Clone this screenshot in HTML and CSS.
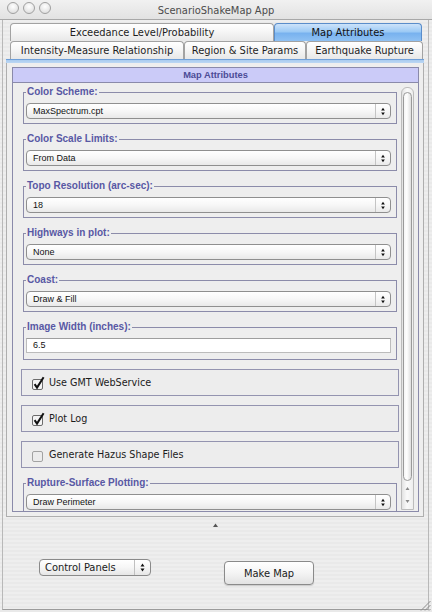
FILE: index.html
```html
<!DOCTYPE html>
<html>
<head>
<meta charset="utf-8">
<title>ScenarioShakeMap App</title>
<link rel="stylesheet" href="styles.css">
</head>
<body>
<div class="window">
  <header class="titlebar">
    <div class="lights"><span class="light"></span><span class="light"></span><span class="light"></span></div>
    <div class="title">ScenarioShakeMap App</div>
    <div></div>
  </header>
  <div class="frame">
    <div class="tabs">
      <div class="tabrow">
        <div class="tab t-exc">Exceedance Level/Probability</div>
        <div class="tab t-map selected">Map Attributes</div>
      </div>
      <div class="tabrow">
        <div class="tab t-imr">Intensity-Measure Relationship</div>
        <div class="tab t-reg">Region &amp; Site Params</div>
        <div class="tab t-eq">Earthquake Rupture</div>
      </div>
    </div>
    <div class="tabstripe"></div>
    <div class="tabpanel">
      <div class="mapattr">
        <div class="mapattr-head">Map Attributes</div>
        <div class="scrollpane">
          <div class="scrollcontent">
            <fieldset class="group"><legend>Color Scheme:</legend>
              <div class="combo"><span class="combo-text">MaxSpectrum.cpt</span><span class="combo-arrows"><svg width="15" height="14" viewBox="0 0 15 14"><path d="M5.5 6.5 L7.5 3.5 L9.5 6.5Z M5.5 8.5 L7.5 11.5 L9.5 8.5Z" fill="#111"/></svg></span></div>
            </fieldset>
            <fieldset class="group"><legend>Color Scale Limits:</legend>
              <div class="combo"><span class="combo-text">From Data</span><span class="combo-arrows"><svg width="15" height="14" viewBox="0 0 15 14"><path d="M5.5 6.5 L7.5 3.5 L9.5 6.5Z M5.5 8.5 L7.5 11.5 L9.5 8.5Z" fill="#111"/></svg></span></div>
            </fieldset>
            <fieldset class="group"><legend>Topo Resolution (arc-sec):</legend>
              <div class="combo"><span class="combo-text">18</span><span class="combo-arrows"><svg width="15" height="14" viewBox="0 0 15 14"><path d="M5.5 6.5 L7.5 3.5 L9.5 6.5Z M5.5 8.5 L7.5 11.5 L9.5 8.5Z" fill="#111"/></svg></span></div>
            </fieldset>
            <fieldset class="group"><legend>Highways in plot:</legend>
              <div class="combo"><span class="combo-text">None</span><span class="combo-arrows"><svg width="15" height="14" viewBox="0 0 15 14"><path d="M5.5 6.5 L7.5 3.5 L9.5 6.5Z M5.5 8.5 L7.5 11.5 L9.5 8.5Z" fill="#111"/></svg></span></div>
            </fieldset>
            <fieldset class="group"><legend>Coast:</legend>
              <div class="combo"><span class="combo-text">Draw &amp; Fill</span><span class="combo-arrows"><svg width="15" height="14" viewBox="0 0 15 14"><path d="M5.5 6.5 L7.5 3.5 L9.5 6.5Z M5.5 8.5 L7.5 11.5 L9.5 8.5Z" fill="#111"/></svg></span></div>
            </fieldset>
            <fieldset class="group group-field"><legend>Image Width (inches):</legend>
              <div class="textfield">6.5</div>
            </fieldset>
            <div class="checkrow">
              <svg class="check" width="14" height="14" viewBox="0 0 14 14"><rect x="0.5" y="3.5" width="10" height="10" rx="1.5" fill="#f4f4f4" stroke="#6c6c6c"/><path d="M2.6 8.2 L5 11.6 L11.6 1.2" fill="none" stroke="#111" stroke-width="2"/></svg>
              <span class="checklabel">Use GMT WebService</span>
            </div>
            <div class="checkrow">
              <svg class="check" width="14" height="14" viewBox="0 0 14 14"><rect x="0.5" y="3.5" width="10" height="10" rx="1.5" fill="#f4f4f4" stroke="#6c6c6c"/><path d="M2.6 8.2 L5 11.6 L11.6 1.2" fill="none" stroke="#111" stroke-width="2"/></svg>
              <span class="checklabel">Plot Log</span>
            </div>
            <div class="checkrow">
              <svg class="check" width="14" height="14" viewBox="0 0 14 14"><rect x="0.5" y="3.5" width="10" height="10" rx="1.5" fill="#ececec" stroke="#a2a2a2"/></svg>
              <span class="checklabel">Generate Hazus Shape Files</span>
            </div>
            <fieldset class="group"><legend>Rupture-Surface Plotting:</legend>
              <div class="combo"><span class="combo-text">Draw Perimeter</span><span class="combo-arrows"><svg width="15" height="14" viewBox="0 0 15 14"><path d="M5.5 6.5 L7.5 3.5 L9.5 6.5Z M5.5 8.5 L7.5 11.5 L9.5 8.5Z" fill="#111"/></svg></span></div>
            </fieldset>
          </div>
          <div class="scrollbar">
            <div class="sb-track"><div class="sb-thumb"></div></div>
            <svg class="sb-arrows" width="11" height="28" viewBox="0 0 11 28"><path d="M3.5 9 L5.5 6 L7.5 9Z M3.5 19 L5.5 22 L7.5 19Z" fill="#8a8a8a"/></svg>
          </div>
        </div>
      </div>
    </div>
    <div class="divider"><svg width="5" height="4" viewBox="0 0 5 4"><path d="M0 4 L2.5 0.5 L5 4Z" fill="#555"/></svg></div>
    <div class="bottom">
      <div class="popup"><span class="popup-text">Control Panels</span><span class="popup-arrows"><svg width="15" height="15" viewBox="0 0 15 15"><path d="M5.5 6.5 L7.5 3.5 L9.5 6.5Z M5.5 8.5 L7.5 11.5 L9.5 8.5Z" fill="#111"/></svg></span></div>
      <button class="button">Make Map</button>
    </div>
  </div>
  <svg class="grip" width="11" height="11" viewBox="0 0 11 11"><path d="M10.5 1 L1 10.5 M10.5 5 L5 10.5 M10.5 9 L9 10.5" stroke="#8c8c8c" stroke-width="1"/></svg>
</div>
</body>
</html>
```

FILE: styles.css
```css
* { box-sizing: border-box; }
html, body { margin: 0; padding: 0; }
body {
  width: 432px;
  height: 612px;
  overflow: hidden;
  background: #ececec;
  font-family: "DejaVu Sans Condensed", "DejaVu Sans", sans-serif;
  color: #1c1c1c;
}
.window {
  position: relative;
  width: 432px;
  height: 612px;
  display: flex;
  flex-direction: column;
  background: repeating-linear-gradient(to bottom, #eeeeee 0, #eeeeee 2px, #e9e9e9 2px, #e9e9e9 4px);
}
.titlebar {
  height: 20px;
  flex: none;
  display: grid;
  grid-template-columns: 1fr auto 1fr;
  background: linear-gradient(#f1f1f1, #e2e2e2);
  border-bottom: 1px solid #a8a8a8;
}
.lights {
  display: flex;
  gap: 4px;
  padding: 2px 0 0 7px;
}
.light {
  width: 12px;
  height: 12px;
  border-radius: 50%;
  border: 1px solid #a0a0a0;
  background: radial-gradient(circle at 50% 35%, #ffffff, #d8d8d8);
}
.title {
  font-size: 11px;
  line-height: 20px;
  padding-top: 1px;
  color: #4b4b4b;
}
.frame {
  flex: 1;
  display: flex;
  flex-direction: column;
  margin: 0 3px 2px 2px;
  padding: 3px 4px 0 3px;
  border-left: 1px solid #b8b8b8;
  border-right: 1px solid #b8b8b8;
  border-bottom: 1px solid #9c9c9c;
}
.tabs {
  margin-left: 4px;
  display: flex;
  flex-direction: column;
}
.tabrow {
  display: flex;
  height: 18px;
}
.tab {
  height: 18px;
  border: 1px solid #a2a2a2;
  border-bottom: 0;
  border-radius: 4px 4px 0 0;
  background: linear-gradient(#ffffff, #f6f6f6 45%, #e8e8e8);
  font-size: 11px;
  line-height: 17px;
  text-align: center;
  color: #1e1e1e;
  white-space: nowrap;
}
.t-exc { width: 264px; }
.t-map { width: 148px; }
.t-imr { width: 174px; }
.t-reg { width: 122px; }
.t-eq { width: 117px; }
.tab.selected {
  border-color: #5a8dca;
  background: linear-gradient(#cde3fa, #9ccaf5 45%, #78b2ef 55%, #8fc1f3);
  color: #111;
}
.tabstripe {
  height: 4px;
  width: 418px;
  background: linear-gradient(#6f9fd8 0, #6f9fd8 1px, #a9cbef 1px, #bcd7f3);
}
.tabpanel {
  width: 418px;
  height: 454px;
  padding: 4px 4px 4px 5px;
  border: 1px solid #aeaeae;
  border-top: 0;
  background: #eeeeee;
}
.mapattr {
  height: 445px;
  border: 1px solid #8a8aaa;
  display: flex;
  flex-direction: column;
}
.mapattr-head {
  height: 15px;
  flex: none;
  background: #cbcbf8;
  border-bottom: 1px solid #8a8aaa;
  font-family: "Liberation Sans", Arial, sans-serif;
  font-weight: bold;
  font-size: 9.3px;
  line-height: 14px;
  text-align: center;
  color: #4c4c96;
}
.scrollpane {
  height: 428px;
  display: flex;
  overflow: hidden;
  background: #eeeeee;
}
.scrollcontent {
  width: 378px;
  margin-left: 8px;
  padding-top: 3px;
  flex: none;
}
.group {
  margin: 0 2px 9px 2px;
  padding: 5px 5px 4px 2px;
  border: 1px solid #8c8caa;
  min-width: 0;
}
.group legend {
  padding: 0 1px;
  margin-left: 0;
  font-family: "Liberation Sans", Arial, sans-serif;
  font-weight: bold;
  font-size: 10px;
  line-height: 12px;
  color: #5858a4;
}
.group-field { padding-bottom: 6px; }
.combo {
  height: 16px;
  display: flex;
  align-items: center;
  border: 1px solid #8f8f8f;
  border-radius: 4px;
  background: linear-gradient(#ffffff, #f7f7f7 50%, #e9e9e9);
}
.combo-text {
  flex: 1;
  padding-left: 6px;
  font-family: "Liberation Sans", Arial, sans-serif;
  font-size: 9px;
  color: #111;
}
.combo-arrows {
  width: 15px;
  height: 14px;
  border-left: 1px solid #c4c4c4;
  display: flex;
}
.textfield {
  height: 15px;
  border: 1px solid #bcbcbc;
  border-top-color: #9e9e9e;
  background: #ffffff;
  padding-left: 6px;
  font-family: "Liberation Sans", Arial, sans-serif;
  font-size: 9px;
  line-height: 13px;
  color: #111;
}
.checkrow {
  height: 27px;
  margin-bottom: 9px;
  display: flex;
  align-items: center;
  gap: 3px;
  padding-left: 10px;
  border: 1px solid #9494b0;
  background: #ededed;
}
.check { flex: none; }
.checklabel {
  font-size: 10.7px;
  color: #1c1c1c;
}
.scrollbar {
  width: 13px;
  flex: none;
  margin: 4px 0 1px 2px;
  display: flex;
  flex-direction: column;
  border: 1px solid #bcbcbc;
  border-radius: 6px 6px 0 0;
  background: linear-gradient(to right, #e2e2e2, #fafafa 45%, #eeeeee);
}
.sb-track {
  flex: 1;
  padding: 4px 0 0 0;
  display: flex;
}
.sb-thumb {
  flex: 1;
  margin: 0 1px;
  border: 1px solid #9a9a9a;
  border-radius: 5px;
  background: linear-gradient(to right, #f4f4f4, #ffffff 40%, #dedede);
}
.sb-arrows { flex: none; }
.divider {
  height: 15px;
  flex: none;
  display: flex;
  justify-content: center;
  align-items: center;
  padding-top: 1px;
}
.bottom {
  flex: 1;
  display: flex;
  align-items: flex-start;
  padding-left: 33px;
}
.popup {
  margin-top: 27px;
  width: 112px;
  height: 17px;
  display: flex;
  align-items: center;
  border: 1px solid #8a8a8a;
  border-radius: 4px;
  background: linear-gradient(#ffffff, #f6f6f6 50%, #e6e6e6);
}
.popup-text {
  flex: 1;
  padding-left: 5px;
  font-size: 11px;
  color: #1a1a1a;
}
.popup-arrows {
  width: 16px;
  height: 15px;
  border-left: 1px solid #c0c0c0;
  display: flex;
}
.button {
  margin: 29px 0 0 73px;
  width: 90px;
  height: 24px;
  padding: 0;
  border: 1px solid #8a8a8a;
  border-radius: 4px;
  background: linear-gradient(#ffffff, #f4f4f4 50%, #e2e2e2);
  font-family: "DejaVu Sans Condensed", "DejaVu Sans", sans-serif;
  font-size: 11px;
  color: #1a1a1a;
  box-shadow: 0 1px 1px rgba(0,0,0,0.15);
}
.grip {
  position: absolute;
  right: 1px;
  bottom: 1px;
}
```
